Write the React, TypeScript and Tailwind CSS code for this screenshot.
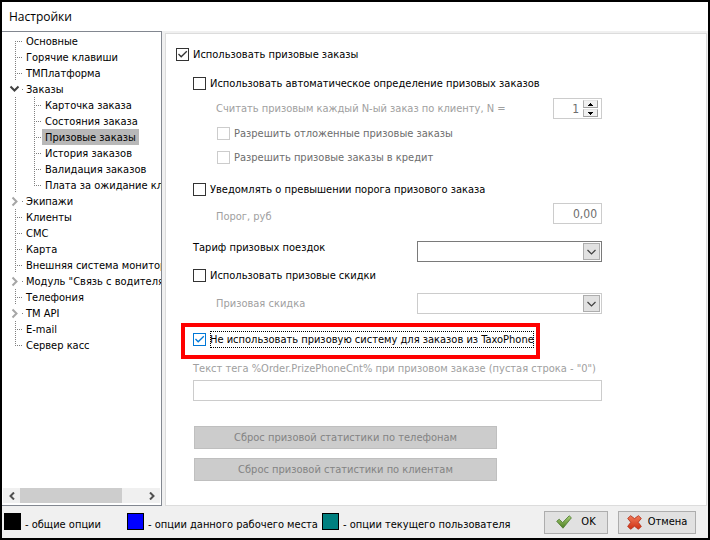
import { useState, type ReactNode } from "react";

type Node = { label: string; depth?: number; kind?: "open" | "closed"; last?: boolean; selected?: boolean };

const nodes: Node[] = [
  { label: "Основные" },
  { label: "Горячие клавиши" },
  { label: "ТМПлатформа" },
  { label: "Заказы", kind: "open" },
  { label: "Карточка заказа", depth: 1 },
  { label: "Состояния заказа", depth: 1 },
  { label: "Призовые заказы", depth: 1, selected: true },
  { label: "История заказов", depth: 1 },
  { label: "Валидация заказов", depth: 1 },
  { label: "Плата за ожидание кл", depth: 1, last: true },
  { label: "Экипажи", kind: "closed" },
  { label: "Клиенты" },
  { label: "СМС" },
  { label: "Карта" },
  { label: "Внешняя система монитори" },
  { label: 'Модуль "Связь с водителя', kind: "closed" },
  { label: "Телефония" },
  { label: "TM API", kind: "closed" },
  { label: "E-mail" },
  { label: "Сервер касс", last: true },
];

function Branch({ kind, first, last, through }: { kind?: "open" | "closed"; first?: boolean; last?: boolean; through?: boolean }) {
  return (
    <svg width="19" height="16" viewBox="0 0 19 16" className="shrink-0" fill="none" aria-hidden="true">
      {!kind && (
        <path d={`M11.5 ${first ? 8 : 0}V${last ? 9 : 16}`} stroke="#808080" strokeDasharray="1 1" />
      )}
      {!kind && !through && <path d="M13 8.5H19" stroke="#808080" strokeDasharray="1 1" />}
      {kind && <path d="M18 8.5H19" stroke="#808080" />}
      {kind === "open" && <path d="M6.5 5.5L10.5 9.5L14.5 5.5" stroke="#404040" strokeWidth="2" />}
      {kind === "closed" && <path d="M8.5 4.5L12.5 8.5L8.5 12.5" stroke="#a6a6a6" strokeWidth="2" />}
    </svg>
  );
}

function Check({ label, checked = false, disabled, focused, id }: { label: string; checked?: boolean; disabled?: boolean; focused?: boolean; id: string }) {
  const [on, setOn] = useState(checked);
  const color = focused ? "border-[#0078d7] text-[#0078d7]" : disabled ? "border-[#cccccc] text-[#cccccc]" : "border-[#333333] text-[#333333]";
  return (
    <div className="flex h-[17px] items-center">
      <span className={`relative block size-[13px] shrink-0 ${color}`}>
        <input
          id={id}
          type="checkbox"
          checked={on}
          disabled={disabled}
          onChange={(e) => setOn(e.target.checked)}
          className="block size-[13px] appearance-none border border-inherit bg-white"
        />
        {on && (
          <svg className="pointer-events-none absolute inset-0" width="13" height="13" viewBox="0 0 13 13" fill="none" aria-hidden="true">
            <path d="M2.5 6L5.2 8.8L10.8 3.2" stroke="currentColor" strokeWidth="1.3" />
          </svg>
        )}
      </span>
      <label
        htmlFor={id}
        className={`ml-[4px] flex h-[17px] items-center pt-px whitespace-nowrap ${focused ? "outline-1 -outline-offset-1 outline-dotted outline-black" : ""} ${disabled ? "text-[#6d6d6d]" : ""}`}
      >
        {label}
      </label>
    </div>
  );
}

function Field({ label, htmlFor, muted, indent, align = "items-center", children }: { label: string; htmlFor: string; muted?: boolean; indent?: boolean; align?: string; children: ReactNode }) {
  return (
    <div className={`flex justify-between ${align} ${indent ? "pl-[40px]" : "pl-[17px]"}`}>
      <label htmlFor={htmlFor} className={`whitespace-nowrap ${muted ? "text-[#a0a0a0]" : ""}`}>
        {label}
      </label>
      {children}
    </div>
  );
}

function Combo({ id, disabled }: { id: string; disabled?: boolean }) {
  return (
    <div className="relative h-[21px] w-[185px] shrink-0">
      <select id={id} disabled={disabled} className={`block size-full appearance-none border bg-white px-1 opacity-100 ${disabled ? "border-[#cccccc]" : "border-[#7a7a7a]"}`}>
        <option value=""></option>
      </select>
      <span className="pointer-events-none absolute top-[2px] right-[2px] flex size-[17px] items-center justify-center border border-[#adadad] bg-[#e1e1e1]">
        <svg width="9" height="6" viewBox="0 0 9 6" fill="none" aria-hidden="true">
          <path d="M0.5 1L4.5 5L8.5 1" stroke="#404040" strokeWidth="1.2" />
        </svg>
      </span>
    </div>
  );
}

function SpinButton({ up }: { up?: boolean }) {
  return (
    <button
      type="button"
      disabled
      aria-label={up ? "Увеличить" : "Уменьшить"}
      className="flex h-[8px] w-[15px] items-center justify-center border border-t-[#e3e3e3] border-r-[#a0a0a0] border-b-[#a0a0a0] border-l-[#b0b0b0] bg-[#f0f0f0]"
    >
      <svg width="5" height="3" viewBox="0 0 5 3" shapeRendering="crispEdges" aria-hidden="true">
        <path d={up ? "M2 0h1v1h1v1h1v1h-5v-1h1v-1h1z" : "M0 0h5v1h-1v1h-1v1h-1v-1h-1v-1h-1z"} fill="#000" />
      </svg>
    </button>
  );
}

function Legend({ swatch, label, className }: { swatch: string; label: string; className: string }) {
  return (
    <div className={`flex items-center whitespace-nowrap ${className}`}>
      <span className={`mr-[4px] size-[17px] shrink-0 border border-black ${swatch}`} />
      <span className="pt-[6px]">{label}</span>
    </div>
  );
}

export default function App() {
  return (
    <div className="flex h-screen flex-col border-2 border-black bg-[#f0f0f0] font-['DejaVu_Sans_Condensed','DejaVu_Sans',sans-serif] text-[11px] leading-[14px] text-black">
      <header className="flex h-[29px] shrink-0 items-center bg-white px-[7px]">
        <h1 className="font-['Open_Sans','Noto_Sans',sans-serif] text-[12px]">Настройки</h1>
      </header>

      <div className="flex min-h-0 flex-1">
        <aside className="flex w-[160px] shrink-0 flex-col border-t border-r border-b border-[#828790] bg-white">
          <ul className="flex-1 overflow-hidden pt-px pl-[2px]">
            {nodes.map((n, i) => (
              <li key={n.label} className="flex h-[16px] items-center">
                {n.depth && <Branch through />}
                <Branch kind={n.kind} first={i === 0} last={n.last} />
                <span className={`h-[16px] px-[3px] leading-[18px] whitespace-nowrap ${n.selected ? "bg-[#b8b8b8]" : ""}`}>{n.label}</span>
              </li>
            ))}
          </ul>
          <div className="mx-px mb-[2px] flex h-[15px] items-center bg-[#f0f0f0]">
            <button type="button" aria-label="Прокрутить влево" className="flex h-full w-[17px] items-center justify-center">
              <svg width="6" height="8" viewBox="0 0 6 8" fill="none" aria-hidden="true">
                <path d="M5 0.5L1.5 4L5 7.5" stroke="#505050" strokeWidth="2" />
              </svg>
            </button>
            <div className="h-full w-[102px] bg-[#cdcdcd]" />
            <button type="button" aria-label="Прокрутить вправо" className="ml-auto flex h-full w-[17px] items-center justify-center">
              <svg width="6" height="8" viewBox="0 0 6 8" fill="none" aria-hidden="true">
                <path d="M1 0.5L4.5 4L1 7.5" stroke="#505050" strokeWidth="2" />
              </svg>
            </button>
          </div>
        </aside>

        <main className="mt-[2px] mr-px ml-[3px] min-w-0 flex-1 overflow-hidden border border-[#dcdcdc] bg-white pl-[10px]">
          <form className="flex w-[426px] flex-col pt-[12px]">
            <Check id="use-prize" label="Использовать призовые заказы" checked />
            <div className="mt-[12px] pl-[17px]">
              <Check id="auto-detect" label="Использовать автоматическое определение призовых заказов" />
            </div>
            <div className="mt-[6px]">
              <Field label="Считать призовым каждый N-ый заказ по клиенту, N =" htmlFor="every-n" muted indent>
                <div className="flex h-[21px] w-[49px] items-center border border-[#cccccc] pr-[2px]">
                  <input id="every-n" type="text" disabled defaultValue="1" className="w-[29px] pr-[4px] text-right text-[12px] text-[#6d6d6d]" />
                  <span className="flex w-[16px] flex-col gap-px">
                    <SpinButton up />
                    <SpinButton />
                  </span>
                </div>
              </Field>
            </div>
            <div className="mt-[6px] flex flex-col gap-[7px] pl-[41px]">
              <Check id="allow-delayed" label="Разрешить отложенные призовые заказы" disabled />
              <Check id="allow-credit" label="Разрешить призовые заказы в кредит" disabled />
            </div>
            <div className="mt-[15px] pl-[17px]">
              <Check id="notify" label="Уведомлять о превышении порога призового заказа" />
            </div>
            <div className="mt-[5px]">
              <Field label="Порог, руб" htmlFor="threshold" muted indent align="items-end">
                <input id="threshold" type="text" disabled defaultValue="0,00" className="h-[21px] w-[49px] border border-[#cccccc] pr-[4px] text-right text-[12px] text-[#6d6d6d]" />
              </Field>
            </div>
            <div className="mt-[17px]">
              <Field label="Тариф призовых поездок" htmlFor="tariff" align="items-start">
                <Combo id="tariff" />
              </Field>
            </div>
            <div className="mt-[5px] pl-[17px]">
              <Check id="use-discount" label="Использовать призовые скидки" />
            </div>
            <div className="mt-[9px]">
              <Field label="Призовая скидка" htmlFor="discount" muted indent>
                <Combo id="discount" disabled />
              </Field>
            </div>
            <div className="mt-[9px] ml-[5px] flex h-[36px] items-center self-start border-4 border-[#ff0000] pr-[2px] pb-[3px] pl-[8px]">
              <Check id="skip-taxophone" label="Не использовать призовую систему для заказов из TaxoPhone" checked focused />
            </div>
            <div className="mt-px flex flex-col gap-[3px] pl-[17px]">
              <label htmlFor="tag-text" className="leading-[17px] whitespace-nowrap text-[#a0a0a0]">
                Текст тега %Order.PrizePhoneCnt% при призовом заказе (пустая строка - "0")
              </label>
              <input id="tag-text" type="text" disabled className="h-[21px] border border-[#cccccc] bg-white px-1" />
            </div>
            <div className="mt-[25px] ml-[18px] flex w-[303px] flex-col gap-[9px] text-[#838383]">
              <button type="button" disabled className="h-[23px] border border-[#bfbfbf] bg-[#cccccc]">
                Сброс призовой статистики по телефонам
              </button>
              <button type="button" disabled className="h-[23px] border border-[#bfbfbf] bg-[#cccccc]">
                Сброс призовой статистики по клиентам
              </button>
            </div>
          </form>
        </main>
      </div>

      <footer className="flex h-[32px] shrink-0 items-center pr-[12px] pb-px pl-[2px]">
        <Legend swatch="bg-black" label="- общие опции" className="w-[123px]" />
        <Legend swatch="bg-[#0000ff]" label="- опции данного рабочего места" className="w-[195px]" />
        <Legend swatch="bg-[#008080]" label="- опции текущего пользователя" className="" />
        <div className="ml-auto flex gap-[10px] pt-px text-[12px]">
          <button type="button" className="flex h-[23px] w-[64px] items-center justify-center gap-[9px] border border-[#adadad] bg-[#e1e1e1]">
            <svg width="16" height="14" viewBox="0 0 16 14" aria-hidden="true">
              <defs>
                <linearGradient id="tick" x1="0" y1="0" x2="0" y2="1">
                  <stop offset="0" stopColor="#a9cf78" />
                  <stop offset="1" stopColor="#4b7d1f" />
                </linearGradient>
              </defs>
              <path d="M0.7 6.3L3.2 4.2L6.6 7.6L13.2 0.8L15.4 2.8L7 13.2Z" fill="url(#tick)" stroke="#54803a" strokeWidth="0.9" strokeLinejoin="round" />
            </svg>
            <span className="text-[11px]">OK</span>
          </button>
          <button type="button" className="flex h-[23px] w-[78px] items-center justify-center gap-[6px] border border-[#adadad] bg-[#e1e1e1]">
            <svg width="15" height="15" viewBox="0 0 15 15" aria-hidden="true">
              <defs>
                <linearGradient id="cross" x1="0" y1="0" x2="0" y2="1">
                  <stop offset="0" stopColor="#f07a58" />
                  <stop offset="1" stopColor="#cf2f12" />
                </linearGradient>
              </defs>
              <path
                d="M3.6 0.7L7.5 3.6L11.4 0.7L14.3 3.4L11.2 7.3L14.3 11.4L11.4 14.3L7.5 11.2L3.6 14.3L0.7 11.4L3.8 7.3L0.7 3.4Z"
                fill="url(#cross)"
                stroke="#b5351f"
                strokeWidth="0.9"
                strokeLinejoin="round"
              />
            </svg>
            <span className="text-[11px]">Отмена</span>
          </button>
        </div>
      </footer>
    </div>
  );
}
